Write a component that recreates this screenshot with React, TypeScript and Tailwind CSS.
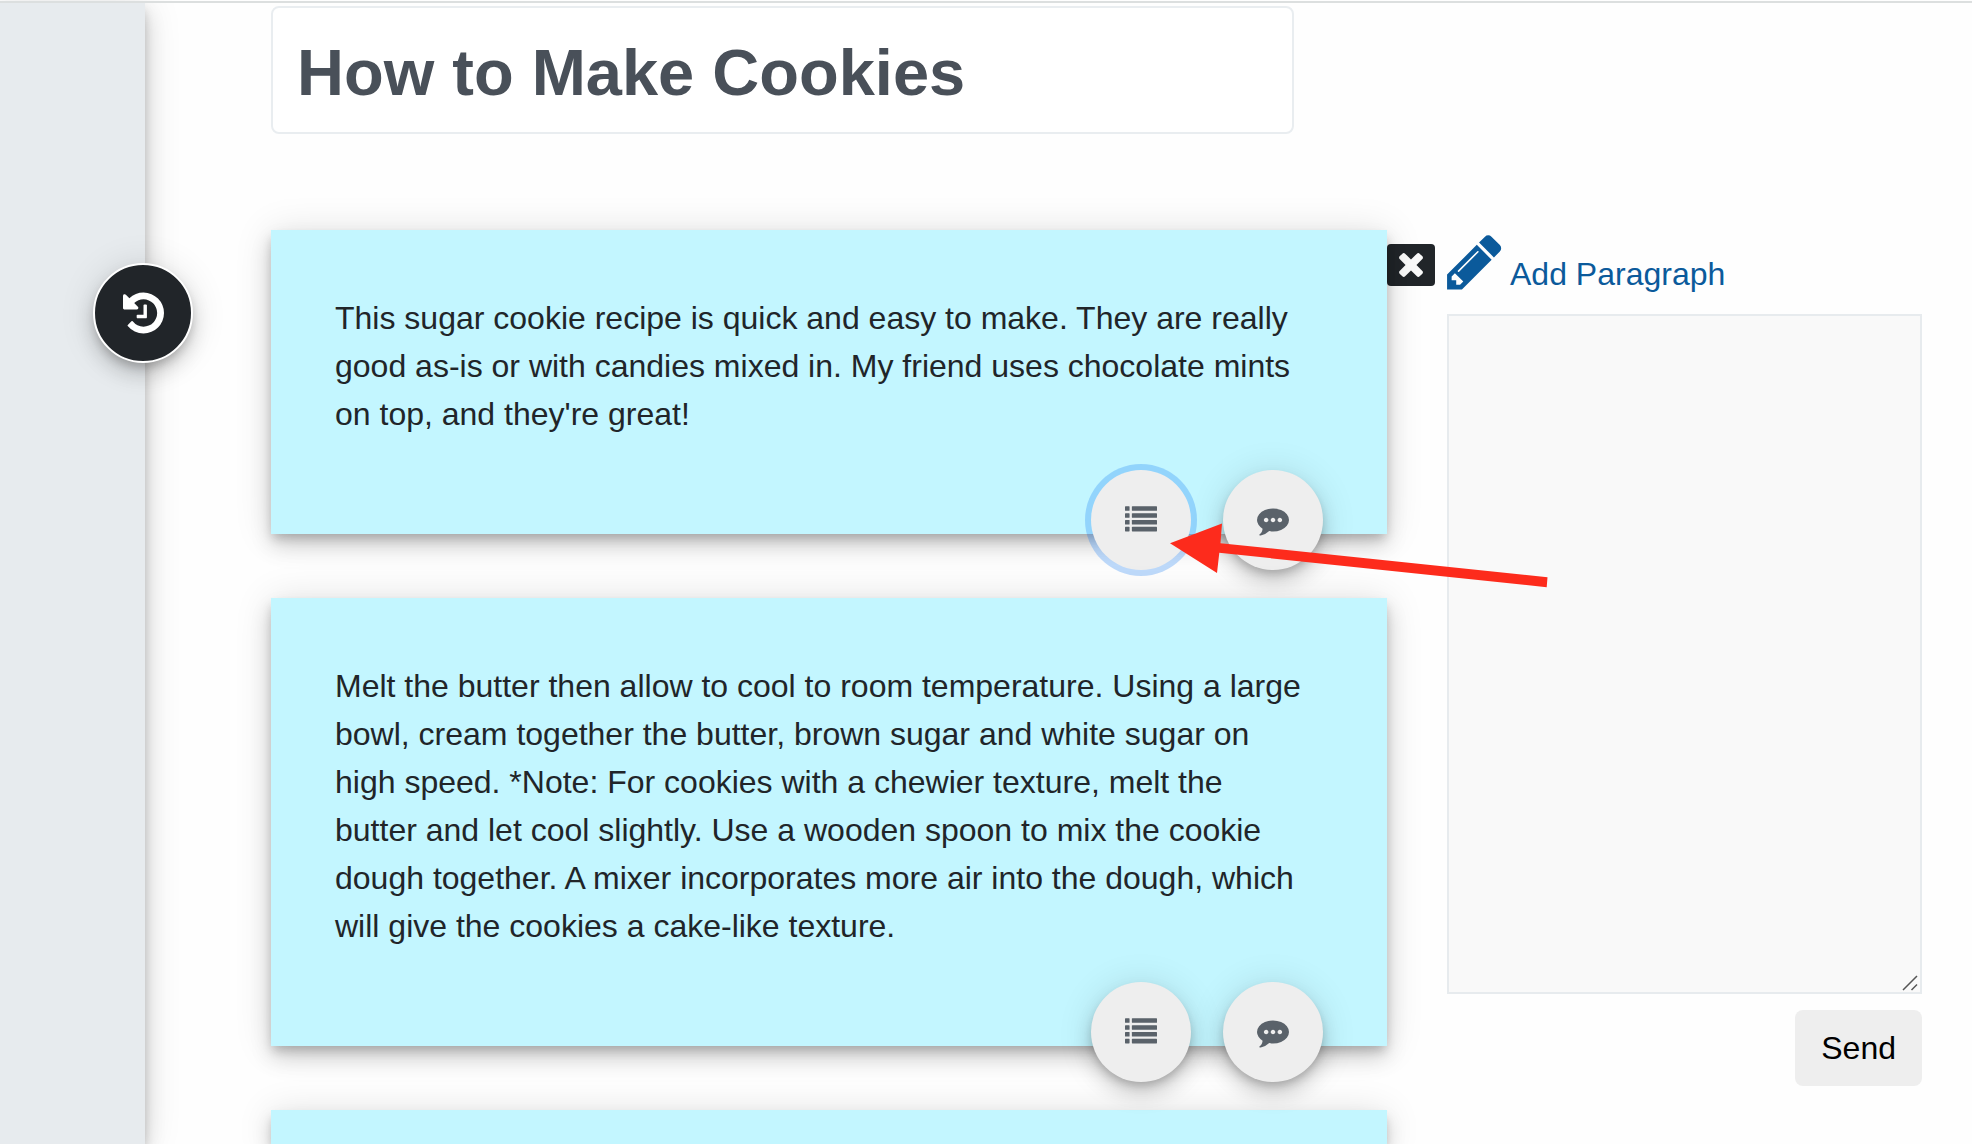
import type { ReactNode } from 'react';

const elevation =
  'shadow-[0_6px_10px_-2px_rgba(0,0,0,0.2),0_12px_20px_0_rgba(0,0,0,0.14),0_2px_36px_0_rgba(0,0,0,0.12)]';

function HistoryIcon() {
  return (
    <svg viewBox="0 0 1536 1792" className="h-12 w-[41px]" fill="currentColor" aria-hidden="true">
      <path d="M1536 896q0 156-61 298t-164 245-245 164-298 61q-172 0-327-72.5t-264-204.5q-7-10-6.5-22.5t8.5-20.5l137-138q10-9 25-9 16 2 23 12 73 95 179 147t225 52q104 0 198.5-40.5t163.5-109.5 109.5-163.5 40.5-198.5-40.5-198.5-109.5-163.5-163.5-109.5-198.5-40.5q-98 0-188 35.5t-160 101.5l137 138q31 30 14 69-17 40-59 40h-448q-26 0-45-19t-19-45v-448q0-42 40-59 39-17 69 14l130 129q107-101 244.5-156.5t284.5-55.5q156 0 298 61t245 164 164 245 61 298zm-640-288v448q0 14-9 23t-23 9h-320q-14 0-23-9t-9-23v-64q0-14 9-23t23-9h224v-352q0-14 9-23t23-9h64q14 0 23 9t9 23z" />
    </svg>
  );
}

function PencilIcon() {
  return (
    <svg viewBox="0 0 1536 1792" className="h-16 w-[55px]" fill="currentColor" aria-hidden="true">
      <path d="M363 1536l91-91-235-235-91 91v107h128v128h107zm523-928q0-22-22-22-10 0-17 7l-542 542q-7 7-7 17 0 22 22 22 10 0 17-7l542-542q7-7 7-17zm-54-192l416 416-832 832h-416v-416zm683 96q0 53-37 90l-166 166-416-416 166-165q36-38 90-38 53 0 91 38l235 234q37 39 37 91z" />
    </svg>
  );
}

function TimesIcon() {
  return (
    <svg viewBox="0 64 1792 1792" className="size-9" fill="currentColor" aria-hidden="true">
      <path d="M1490 1322q0 40-28 68l-136 136q-28 28-68 28t-68-28l-294-294-294 294q-28 28-68 28t-68-28l-136-136q-28-28-28-68t28-68l294-294-294-294q-28-28-28-68t28-68l136-136q28-28 68-28t68 28l294 294 294-294q28-28 68-28t68 28l136 136q28 28 28 68t-28 68l-294 294 294 294q28 28 28 68z" />
    </svg>
  );
}

function ListIcon() {
  return (
    <svg viewBox="0 0 1792 1792" className="size-8" fill="currentColor" aria-hidden="true">
      {[128, 512, 896, 1280].map((y) => (
        <g key={y}>
          <rect x="0" y={y} width="256" height="256" rx="32" />
          <rect x="384" y={y} width="1408" height="256" rx="32" />
        </g>
      ))}
    </svg>
  );
}

function CommentIcon() {
  return (
    <svg viewBox="0 0 1792 1792" className="size-8" fill="currentColor" aria-hidden="true">
      <path d="M640 896q0-53-37.5-90.5t-90.5-37.5-90.5 37.5-37.5 90.5 37.5 90.5 90.5 37.5 90.5-37.5 37.5-90.5zm384 0q0-53-37.5-90.5t-90.5-37.5-90.5 37.5-37.5 90.5 37.5 90.5 90.5 37.5 90.5-37.5 37.5-90.5zm384 0q0-53-37.5-90.5t-90.5-37.5-90.5 37.5-37.5 90.5 37.5 90.5 90.5 37.5 90.5-37.5 37.5-90.5zm384 0q0 174-120 321.5t-326 233-450 85.5q-110 0-211-18-173 173-435 229-52 10-86 13-12 1-22-6t-13-18q-4-15 20-37 5-5 23.5-21.5t25.5-23.5 23.5-25.5 24-31.5 20.5-37 20-48 14.5-57.5 12.5-72.5q-146-90-229.5-216.5t-83.5-269.5q0-174 120-321.5t326-233 450-85.5 450 85.5 326 233 120 321.5z" />
    </svg>
  );
}

function RoundButton({ label, focused, children }: { label: string; focused?: boolean; children: ReactNode }) {
  return (
    <button
      type="button"
      aria-label={label}
      className={`flex size-[100px] items-center justify-center rounded-full bg-[#eeeeee] text-[#5a626a] ${
        focused ? 'shadow-[0_0_0_6px_rgba(0,110,245,0.25)]' : elevation
      }`}
    >
      {children}
    </button>
  );
}

function Card({ text, focused, children }: { text: string; focused?: boolean; children?: ReactNode }) {
  return (
    <article className={`relative bg-[#c3f6ff] pt-16 pr-20 pb-24 pl-16 ${elevation}`}>
      <p className="text-[32px] leading-[48px]">{text}</p>
      <div className="absolute right-16 -bottom-9 flex gap-8">
        <RoundButton label="Show list" focused={focused}>
          <ListIcon />
        </RoundButton>
        <RoundButton label="Comment">
          <CommentIcon />
        </RoundButton>
      </div>
      {children}
    </article>
  );
}

export default function App() {
  return (
    <div className="flex min-h-screen flex-col overflow-hidden bg-[#fefefe] pt-px font-['Liberation_Sans',Arial,sans-serif] text-[#212529]">
      <div className="relative z-10 h-0.5 bg-[#dcdfdf]" />
      <div className="flex flex-1">
        <aside className={`relative w-[145px] shrink-0 bg-[#e7ebee] ${elevation}`}>
          <button
            type="button"
            aria-label="History"
            className={`absolute top-[260px] -right-12 flex size-[100px] items-center justify-center rounded-full border-2 border-white bg-[#212529] text-white ${elevation}`}
          >
            <HistoryIcon />
          </button>
        </aside>

        <div className="flex flex-1 pr-[50px] pl-[126px]">
          <main className="flex min-w-0 flex-1 flex-col pt-[3px]">
            <input
              type="text"
              aria-label="Title"
              defaultValue="How to Make Cookies"
              className="h-32 w-11/12 rounded-lg border-2 border-[#e9edf0] bg-white px-6 pt-1 text-[65px] font-bold text-[#495059] outline-none"
            />
            <section className="mt-24 flex flex-1 flex-col gap-16">
              <Card
                focused
                text="This sugar cookie recipe is quick and easy to make. They are really good as-is or with candies mixed in. My friend uses chocolate mints on top, and they're great!"
              >
                <svg
                  viewBox="0 0 378 66"
                  className="pointer-events-none absolute top-[293px] -right-[161px] z-10 h-[66px] w-[378px]"
                  fill="#fd2b1c"
                  aria-hidden="true"
                >
                  <path d="M0 20.3 52 .5 50.5 20.2 377.5 54.2 376.7 64.2 49.3 29.8 47 50Z" />
                </svg>
              </Card>
              <Card text="Melt the butter then allow to cool to room temperature. Using a large bowl, cream together the butter, brown sugar and white sugar on high speed. *Note: For cookies with a chewier texture, melt the butter and let cool slightly. Use a wooden spoon to mix the cookie dough together. A mixer incorporates more air into the dough, which will give the cookies a cake-like texture." />
              <article className={`flex-1 bg-[#c3f6ff] ${elevation}`} />
            </section>
          </main>

          <button
            type="button"
            aria-label="Close"
            className="mt-[241px] flex h-[42px] w-12 shrink-0 items-center justify-center rounded bg-[#212529] text-[#fafafa]"
          >
            <TimesIcon />
          </button>

          <form className="ml-3 flex w-[475px] shrink-0 flex-col items-end pt-[227px]">
            <label htmlFor="paragraph" className="flex h-[84px] w-full items-start gap-2 text-[#0b5a9b]">
              <PencilIcon />
              <span className="pt-5 text-[32px] leading-[48px]">Add Paragraph</span>
            </label>
            <div className="relative w-full">
              <textarea
                id="paragraph"
                className="block h-[680px] w-full resize-none border-2 border-[#e7ebee] bg-[#f9f9f9] p-3 text-[32px] outline-none"
              />
              <svg
                viewBox="0 0 16 16"
                className="pointer-events-none absolute right-1 bottom-[3px] size-4"
                stroke="#555"
                strokeWidth="1.5"
                aria-hidden="true"
              >
                <path d="M1 15 15 1M9.500 15 15 9.500" />
              </svg>
            </div>
            <button type="button" className="mt-4 h-[76px] rounded-lg bg-[#eeeeee] px-[26px] text-[32px] text-black">
              Send
            </button>
          </form>
        </div>
      </div>
    </div>
  );
}
